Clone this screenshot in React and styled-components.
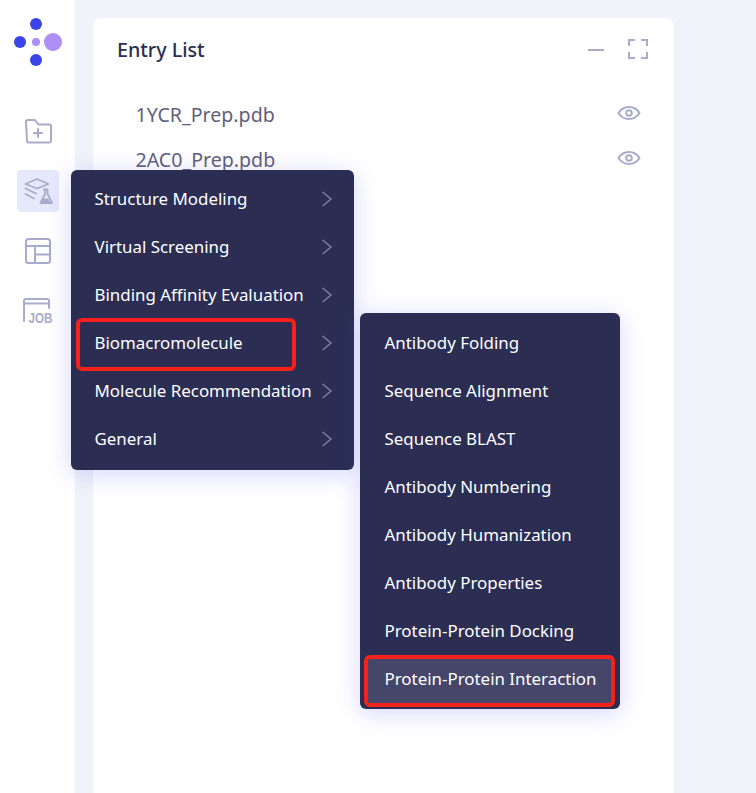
import React from 'react'
import styled, { createGlobalStyle } from 'styled-components'

const GlobalStyle = createGlobalStyle`
    html, body {
        margin: 0;
        height: 100%;
        overflow: hidden;
        background-color: #f0f3fa;
        font-family: "Noto Sans", "Open Sans", sans-serif;
    }
`

const Page = styled.div`
    position: relative;
    display: flex;
    width: 756px;
    height: 793px;
    overflow: hidden;
`

const Sidebar = styled.nav`
    display: flex;
    flex-direction: column;
    align-items: center;
    flex: none;
    width: 75px;
    padding-top: 18px;
    box-sizing: border-box;
    background-color: #ffffff;
`

const Logo = styled.svg`
    display: block;
    margin-left: 3px;
    margin-bottom: 44px;
`

const NavList = styled.div`
    display: flex;
    flex-direction: column;
`

const NavButton = styled.button`
    display: flex;
    align-items: center;
    justify-content: center;
    width: 42px;
    height: 42px;
    margin-bottom: 18px;
    padding: 0;
    border: 0;
    border-radius: 4px;
    background-color: ${({ $active }) => ($active ? '#e6e9fb' : 'transparent')};
`

const Main = styled.main`
    flex: 1;
    padding: 18px 82px 0 18px;
`

const Card = styled.section`
    height: 900px;
    padding: 16px 24px;
    box-sizing: border-box;
    border-radius: 8px;
    background-color: #ffffff;
`

const CardHeader = styled.header`
    display: flex;
    align-items: center;
    justify-content: space-between;
    height: 30px;
    margin-bottom: 27px;
`

const CardTitle = styled.h2`
    margin: 0;
    font-size: 19.7px;
    font-weight: 500;
    color: #2b2e50;
`

const CardTools = styled.div`
    display: flex;
    align-items: center;
    gap: 22px;
    margin-right: 1px;
`

const EntryRow = styled.div`
    display: flex;
    align-items: center;
    justify-content: space-between;
    height: 45px;
    padding: 2px 9px 0 18.500px;
    box-sizing: border-box;
    font-size: 19.6px;
    color: #5f607e;
`

const EyeSvg = styled.svg`
    margin-bottom: 4px;
`

const Menu = styled.ul`
    position: absolute;
    left: ${({ $left }) => $left}px;
    top: ${({ $top }) => $top}px;
    width: ${({ $width }) => $width}px;
    margin: 0;
    padding: ${({ $padTop, $padBottom }) => `${$padTop}px 6px ${$padBottom}px`};
    box-sizing: border-box;
    list-style: none;
    border-radius: 6px;
    background-color: #2b2e52;
    box-shadow: 0 4px 24px rgba(80, 80, 240, 0.24);
`

const MenuItem = styled.li`
    position: relative;
    display: flex;
    align-items: center;
    height: 48px;
    padding: 0 18px 2px ${({ $inset }) => $inset}px;
    box-sizing: border-box;
    font-size: 16.9px;
    white-space: nowrap;
    color: #ffffff;
    border-radius: 4px;
    background-color: ${({ $hover }) => ($hover ? '#45466a' : 'transparent')};
`

const Chevron = styled.svg`
    position: absolute;
    right: 15px;
    top: 15px;
`

// red annotation boxes drawn over the screenshot
const Callout = styled.span`
    position: absolute;
    left: ${({ $left }) => $left}px;
    top: ${({ $top }) => $top}px;
    width: ${({ $width }) => $width}px;
    height: ${({ $height }) => $height}px;
    box-sizing: border-box;
    border: 4px solid #f5211a;
    border-radius: 6px;
    pointer-events: none;
`

const ICON = '#a9abcb'

const FolderIcon = () => (
    <svg width="30" height="30" viewBox="0 0 30 30" fill="none" stroke={ICON} strokeWidth="2" strokeLinejoin="round">
        <path d="M3 5.500a1.500 1.500 0 0 1 1.500-1.500h7.500l3.500 4.500h11a1.500 1.500 0 0 1 1.500 1.500v15a1.500 1.500 0 0 1-1.500 1.500h-21a1.500 1.500 0 0 1-1.500-1.500z" />
        <path d="M15 13v8M11 17h8" strokeLinecap="round" />
    </svg>
)

const LayersFlaskIcon = () => (
    <svg width="30" height="30" viewBox="0 0 30 30" fill="none" stroke={ICON} strokeWidth="1.800" strokeLinejoin="round" strokeLinecap="round">
        <path d="M2.500 8 14 3l11.500 5L14 12.500z" />
        <path d="M2.500 12.500 13 17.500M2.500 18 11 22.500" />
        <path d="M21 13.500h3.500M22 14v4l-4.500 9h11.500l-4.500-9v-4" />
        <path d="M18 27l2.500-4.500h4.500l2.500 4.500z" fill={ICON} stroke="none" />
    </svg>
)

const LayoutIcon = () => (
    <svg width="30" height="30" viewBox="0 0 30 30" fill="none" stroke={ICON} strokeWidth="2">
        <rect x="3" y="3" width="24" height="24" rx="2.500" />
        <path d="M3 10h24M12 10v17M12 18.500h15" />
    </svg>
)

const JobIcon = () => (
    <svg width="42" height="32" viewBox="0 0 42 32" fill="none">
        <path d="M7 26V6a2 2 0 0 1 2-2h21a2 2 0 0 1 2 2v7M7 8.500h25" stroke={ICON} strokeWidth="2" strokeLinecap="round" />
        <text x="11.500" y="27.500" textLength="24" lengthAdjust="spacingAndGlyphs" fill={ICON} fontFamily="Liberation Sans" fontSize="14" fontWeight="700">JOB</text>
    </svg>
)

const MinimizeIcon = () => (
    <svg width="18" height="18" viewBox="0 0 18 18" fill="none" stroke={ICON} strokeWidth="2">
        <path d="M1 10h16" />
    </svg>
)

const FullscreenIcon = () => (
    <svg width="22" height="22" viewBox="0 0 22 22" fill="none" stroke={ICON} strokeWidth="2">
        <path d="M8 2H2v6M14 2h6v6M20 14v6h-6M8 20H2v-6" />
    </svg>
)

const EyeIcon = () => (
    <EyeSvg width="24" height="24" viewBox="0 0 24 24" fill="none" stroke={ICON} strokeWidth="2">
        <path d="M1.500 12C4 8 7.500 6 12 6s8 2 10.500 6c-2.500 4-6 6-10.500 6s-8-2-10.500-6z" />
        <circle cx="12" cy="12" r="2.800" />
    </EyeSvg>
)

const ChevronIcon = () => (
    <Chevron width="12" height="18" viewBox="0 0 12 18" fill="none" stroke="#7e7f9c" strokeWidth="1.500">
        <path d="M1.500 2 10 9l-8.500 7" />
    </Chevron>
)

const mainItems = [
    'Structure Modeling',
    'Virtual Screening',
    'Binding Affinity Evaluation',
    'Biomacromolecule',
    'Molecule Recommendation',
    'General'
]

const subItems = [
    'Antibody Folding',
    'Sequence Alignment',
    'Sequence BLAST',
    'Antibody Numbering',
    'Antibody Humanization',
    'Antibody Properties',
    'Protein-Protein Docking',
    'Protein-Protein Interaction'
]

const App = () => (
    <Page>
        <GlobalStyle />
        <Sidebar>
            <Logo width="50" height="48" viewBox="0 0 50 48">
                <circle cx="22" cy="6" r="6" fill="#3b44e6" />
                <circle cx="6" cy="24" r="6" fill="#3b44e6" />
                <circle cx="22" cy="42" r="6" fill="#3b44e6" />
                <circle cx="22" cy="24" r="4" fill="#ac8ef5" />
                <circle cx="39" cy="24" r="9" fill="#ac8ef5" />
            </Logo>
            <NavList>
                <NavButton><FolderIcon /></NavButton>
                <NavButton $active><LayersFlaskIcon /></NavButton>
                <NavButton><LayoutIcon /></NavButton>
                <NavButton><JobIcon /></NavButton>
            </NavList>
        </Sidebar>
        <Main>
            <Card>
                <CardHeader>
                    <CardTitle>Entry List</CardTitle>
                    <CardTools>
                        <MinimizeIcon />
                        <FullscreenIcon />
                    </CardTools>
                </CardHeader>
                <EntryRow>
                    1YCR_Prep.pdb
                    <EyeIcon />
                </EntryRow>
                <EntryRow>
                    2AC0_Prep.pdb
                    <EyeIcon />
                </EntryRow>
            </Card>
        </Main>
        <Menu $left={71} $top={170} $width={283} $padTop={5} $padBottom={7}>
            {mainItems.map((item) => (
                <MenuItem key={item} $inset={17.5}>
                    {item}
                    <ChevronIcon />
                </MenuItem>
            ))}
        </Menu>
        <Menu $left={360} $top={313} $width={260} $padTop={6} $padBottom={6}>
            {subItems.map((item, index) => (
                <MenuItem key={item} $inset={18.5} $hover={index === subItems.length - 1}>
                    {item}
                </MenuItem>
            ))}
        </Menu>
        <Callout $left={76} $top={318} $width={220} $height={53} />
        <Callout $left={364} $top={655} $width={251} $height={52} />
    </Page>
)

export default App
